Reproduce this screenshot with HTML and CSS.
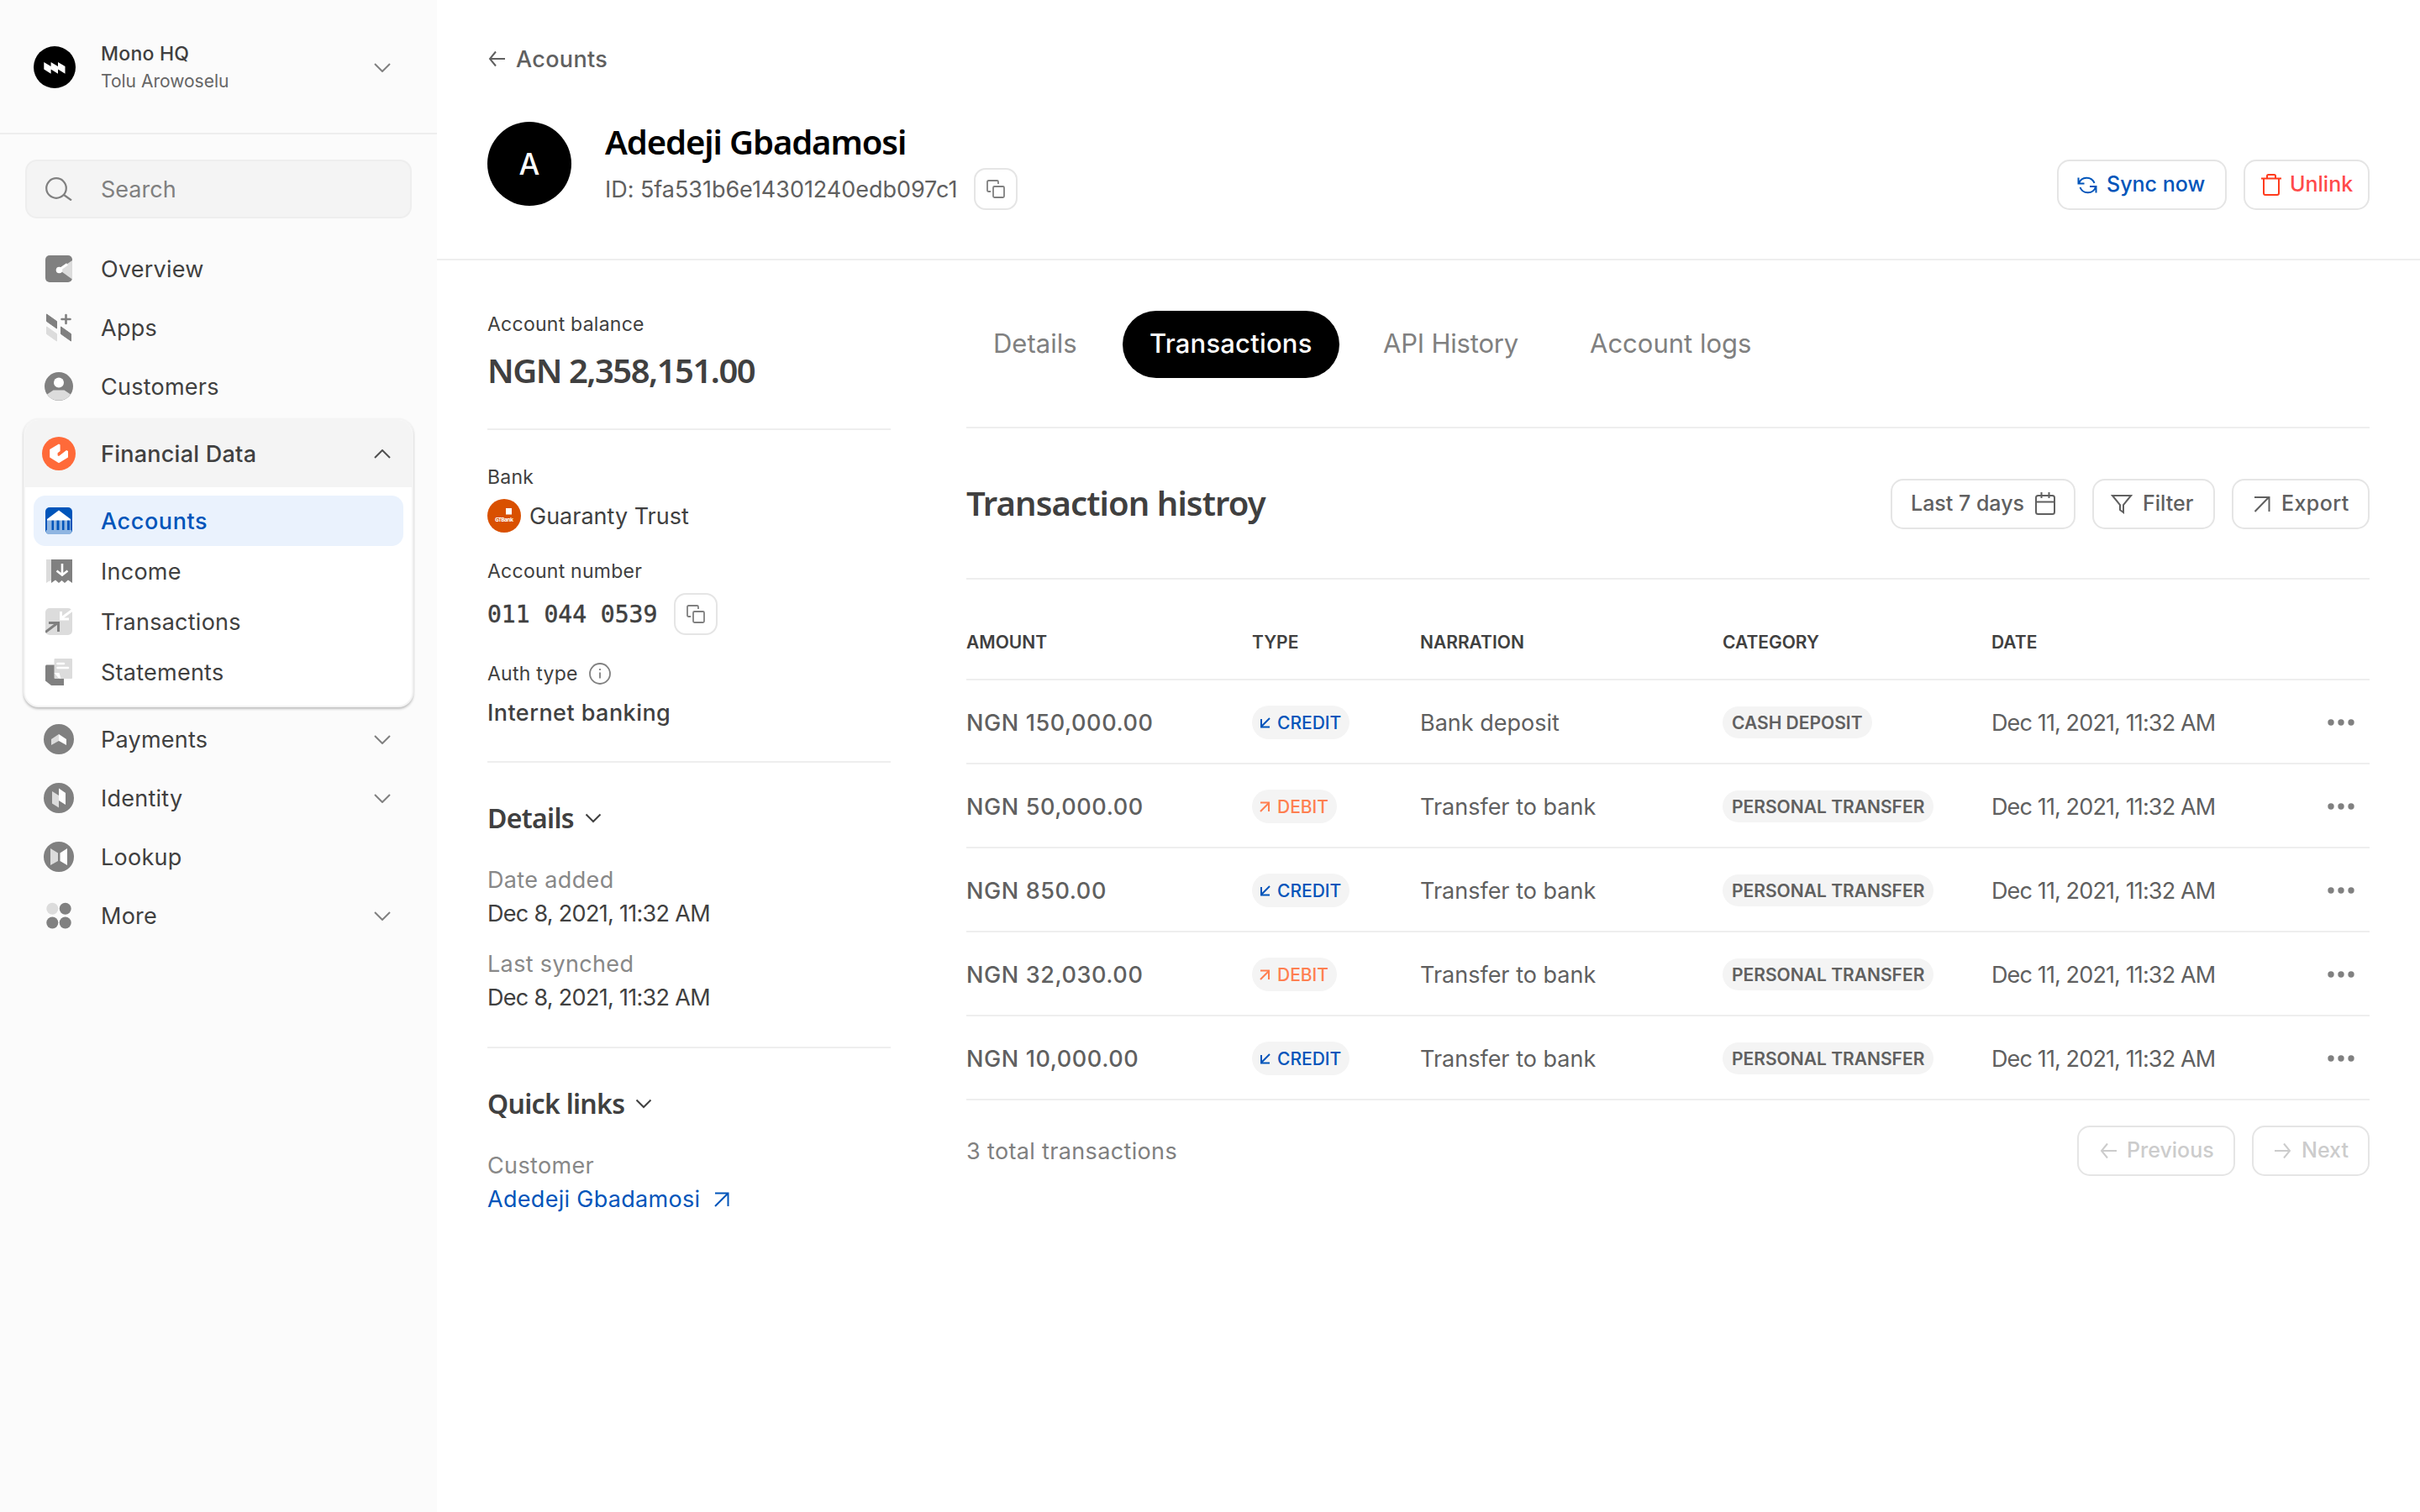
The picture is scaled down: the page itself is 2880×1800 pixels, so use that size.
FILE: index.html
```html
<!DOCTYPE html>
<html lang="en">
<head>
	<meta charset="UTF-8">
	<title>Mono - Account</title>
	<link rel="stylesheet" href="styles.css">
</head>
<body>
	<div class="sidebar">
		<div class="workspace">
			<span class="slot"><svg width="50" height="50"><circle cx="25" cy="25" r="25" fill="#000"/><path fill="#fff" d="M12.3 19l8.3 5v8.7l-8.3-5.2zM20.6 19l8.4 5v8.7l-8.4-5.2zM29 19l8.5 5v8.7L29 27.5z"/></svg></span>
			<div class="workspace-text">
				<div class="workspace-name">Mono HQ</div>
				<div class="workspace-user">Tolu Arowoselu</div>
			</div>
			<svg class="chev" width="20" height="11"><path d="M1 1l9 9 9-9"/></svg>
		</div>
		<div class="search">
			<span class="slot"><svg width="32" height="28" fill="none" stroke="#808080" stroke-width="2.2"><circle cx="13" cy="13" r="11.8"/><path d="M22 21l9 6.5"/></svg></span>
			<span class="search-text">Search</span>
		</div>
		<div class="nav">
			<div class="nav-item">
				<span class="slot"><svg width="32" height="32"><rect width="32" height="32" rx="5" fill="#808080"/><path fill="#dcdcdc" d="M16 17L32 6v22.5z"/><path stroke="#fff" stroke-width="3" d="M16 17.5l10-7"/><circle cx="16.5" cy="17.5" r="3.8" fill="#fff"/></svg></span>
				<span>Overview</span>
			</div>
			<div class="nav-item">
				<span class="slot"><svg width="32" height="34"><path fill="#808080" stroke="#808080" stroke-linejoin="round" d="M1.5 1l12 8.500V18l-12-8.500zM18.500 16l12 8.500V33l-12-8.500z"/><path fill="#dcdcdc" stroke="#dcdcdc" stroke-linejoin="round" d="M1.500 16l12 8.500V33l-12-8.500z"/><path stroke="#808080" stroke-width="2.6" stroke-linecap="round" d="M24.500 2v10M19.500 7h10"/></svg></span>
				<span>Apps</span>
			</div>
			<div class="nav-item">
				<span class="slot"><svg width="34" height="34"><circle cx="17" cy="17" r="17" fill="#808080"/><path fill="#dcdcdc" d="M3 26.500l7.500-5h13l7.500 5A17 17 0 0 1 3 26.500z"/><circle cx="17" cy="12.500" r="6" fill="#fff"/></svg></span>
				<span>Customers</span>
			</div>
			<div class="nav-card">
				<div class="nav-card-head">
					<span class="slot"><svg width="40" height="40"><circle cx="20" cy="20" r="20" fill="#ff6a39"/><path fill="#fff" d="M9.200 15L20 8.500l1.600 1v7.500l-3 2.200v3l1.400.8L29 16l2 1v7.500L20 31.300 9.200 24.500z"/></svg></span>
					<span>Financial Data</span>
					<svg class="chev dark" width="20" height="11"><path d="M1 10l9-9 9 9"/></svg>
				</div>
				<div class="nav-card-body">
					<div class="sub active">
						<span class="slot"><svg width="32" height="32"><rect width="32" height="32" rx="5" fill="#0055ba"/><path fill="#8fb5e1" d="M2 15h5.500v12H2zM10 15h3.500v12H10zM16.500 15h3.500v12h-3.500zM22.500 15H26v12h-3.500zM29 15h1v12h-1zM1 27h30v3l-2 2H3l-2-2z"/><path fill="#fff" d="M16 3.500L30 14v1.500H2V14z"/></svg></span>
						<span>Accounts</span>
					</div>
					<div class="sub">
						<span class="slot"><svg width="31" height="28"><path fill="#dcdcdc" d="M0 0h6v25l-3 1-3 2z"/><path fill="#808080" d="M6 0h25v28l-5-3.500-4 3.500-3.500-3-3.500 3-4-3.500L6 28z"/><path fill="none" stroke="#fff" stroke-width="2.6" d="M19 5v13M12.500 13.500l6.500 5 6.500-5"/></svg></span>
						<span>Income</span>
					</div>
					<div class="sub">
						<span class="slot"><svg width="32" height="32"><rect width="32" height="32" rx="5" fill="#dcdcdc"/><path fill="none" stroke="#fff" stroke-width="3" d="M32 2.500L19 12M18.500 4v9H28"/><path fill="none" stroke="#808080" stroke-width="3" d="M0 28.500L14 18M4 17.500h11.500V28"/></svg></span>
						<span>Transactions</span>
					</div>
					<div class="sub">
						<span class="slot"><svg width="32" height="32"><path fill="#808080" d="M0 8.500l1-1h21V32H7l-7-5.500z"/><rect x="10.500" width="21.500" height="24" rx="1" fill="#dcdcdc"/><path fill="#fff" d="M10.500 17h6l2 7-3-1z"/><path stroke="#fff" stroke-width="2.6" stroke-linecap="round" d="M14.500 6H22M14.500 11H27"/></svg></span>
						<span>Statements</span>
					</div>
				</div>
			</div>
			<div class="nav-item">
				<span class="slot"><svg width="36" height="36"><circle cx="18" cy="18" r="18" fill="#808080"/><path fill="#dcdcdc" d="M9 18l9-6v8l-9 5z"/><path fill="#fff" d="M18 12l9 6v7l-9-5z"/></svg></span>
				<span>Payments</span>
				<svg class="chev" width="20" height="11"><path d="M1 1l9 9 9-9"/></svg>
			</div>
			<div class="nav-item">
				<span class="slot"><svg width="36" height="36"><circle cx="18" cy="18" r="18" fill="#808080"/><path fill="#dcdcdc" d="M10 10l8 5v14.500l-8-5z"/><path fill="#fff" d="M18 6.500l8 5.500v14l-8-5z"/></svg></span>
				<span>Identity</span>
				<svg class="chev" width="20" height="11"><path d="M1 1l9 9 9-9"/></svg>
			</div>
			<div class="nav-item">
				<span class="slot"><svg width="36" height="36"><circle cx="18" cy="18" r="18" fill="#808080"/><path fill="#dcdcdc" d="M8 8l9 5.500V23l-9 5z"/><path fill="#fff" d="M28 8l-8.500 5.500V23l8.500 5z"/></svg></span>
				<span>Lookup</span>
			</div>
			<div class="nav-item">
				<span class="slot"><svg width="30" height="32"><circle cx="7.300" cy="7.800" r="7" fill="#dcdcdc"/><g fill="#808080"><circle cx="22.700" cy="7.800" r="7"/><circle cx="7.300" cy="24.500" r="7"/><circle cx="22.700" cy="24.500" r="7"/></g></svg></span>
				<span>More</span>
				<svg class="chev" width="20" height="11"><path d="M1 1l9 9 9-9"/></svg>
			</div>
		</div>
	</div>

	<div class="main">
		<div class="header">
			<div class="back"><svg width="20" height="20" class="line"><path d="M20 10H2M9 1.500L2 10l7 8.500"/></svg><span>Acounts</span></div>
			<div class="profile">
				<div class="avatar">A</div>
				<div class="profile-text">
					<h1>Adedeji Gbadamosi</h1>
					<div class="profile-id"><span>ID: 5fa531b6e14301240edb097c1</span><button class="copy"><svg width="24" height="24"><path d="M6 15H3.500Q2 15 2 13.500V3.500Q2 2 3.500 2h10Q15 2 15 3.500V6"/><rect x="9" y="9" width="13" height="13" rx="1.500"/></svg></button></div>
				</div>
				<button class="btn sync"><svg width="24" height="21" class="line"><path d="M1.500 1.500v7h7M2 8.500A9.800 9.800 0 0 1 20.500 8M22.500 19.500V12H15M22 12.500A9.800 9.800 0 0 1 3.500 13"/></svg><span>Sync now</span></button>
				<button class="btn unlink"><svg width="24" height="28" class="line"><path d="M0 6.500h24M3 6.500V24q0 2 2 2h14q2 0 2-2V6.500M7 6V3.500Q7 2 8.500 2h7Q17 2 17 3.500V6"/></svg><span>Unlink</span></button>
			</div>
		</div>
		<div class="content">
			<div class="info">
				<div class="section balance">
					<div class="label">Account balance</div>
					<div class="amount">NGN 2,358,151.00</div>
				</div>
				<div class="section bank">
					<div class="label">Bank</div>
					<div class="bank-row"><svg width="40" height="40"><circle cx="20" cy="20" r="20" fill="#d95000"/><rect x="22" y="11" width="7" height="7.500" fill="#fff"/><text class="gt" x="9" y="26.500" textLength="22">GTBank</text></svg><span>Guaranty Trust</span></div>
					<div class="label">Account number</div>
					<div class="number-row"><span class="number">011 044 0539</span><button class="copy"><svg width="24" height="24"><path d="M6 15H3.500Q2 15 2 13.500V3.500Q2 2 3.500 2h10Q15 2 15 3.500V6"/><rect x="9" y="9" width="13" height="13" rx="1.500"/></svg></button></div>
					<div class="label auth"><span>Auth type</span><svg width="26" height="26" fill="none" stroke="#808080" stroke-width="1.8"><circle cx="13" cy="13" r="12"/><path d="M13 11.500v7M13 7v2"/></svg></div>
					<div class="auth-value">Internet banking</div>
				</div>
				<div class="section facts">
					<h3><span>Details</span><svg width="20" height="12" class="line"><path d="M1.500 1.500L10 10l8.500-8.500"/></svg></h3>
					<dl>
						<dt>Date added</dt>
						<dd>Dec 8, 2021, 11:32 AM</dd>
						<dt class="second">Last synched</dt>
						<dd>Dec 8, 2021, 11:32 AM</dd>
					</dl>
				</div>
				<div class="section facts last">
					<h3><span>Quick links</span><svg width="20" height="12" class="line"><path d="M1.500 1.500L10 10l8.500-8.500"/></svg></h3>
					<dl>
						<dt>Customer</dt>
						<dd class="link"><span>Adedeji Gbadamosi</span><svg width="18" height="18" class="line"><path d="M1 17L16 2M1 1.500h15.500V17"/></svg></dd>
					</dl>
				</div>
			</div>
			<div class="panel">
				<div class="tabs">
					<span class="tab t1">Details</span>
					<span class="tab current">Transactions</span>
					<span class="tab t3">API History</span>
					<span class="tab t4">Account logs</span>
				</div>
				<div class="panel-head">
					<h2>Transaction histroy</h2>
					<button class="btn days"><span>Last 7 days</span><svg width="24" height="28" class="line"><rect x="1" y="4" width="22" height="22" rx="2.500"/><path d="M1 11.500h22M7.500 0v7M16.500 0v7"/></svg></button>
					<button class="btn filter"><svg width="26" height="24" class="line"><path d="M2 2h22l-9 11v9l-4-3v-6z"/></svg><span>Filter</span></button>
					<button class="btn export"><svg width="20" height="20" class="line"><path d="M1.500 19L18 2M1 2h17.500v17"/></svg><span>Export</span></button>
				</div>
				<div class="table" id="table">
					<div class="row head"><span>AMOUNT</span><span>TYPE</span><span>NARRATION</span><span>CATEGORY</span><span>DATE</span></div>
				</div>
				<div class="pager">
					<span class="total">3 total transactions</span>
					<button class="btn off prev"><svg width="20" height="20" class="line"><path d="M20 10H2M9 1.500L2 10l7 8.500"/></svg><span>Previous</span></button>
					<button class="btn off next"><svg width="20" height="20" class="line"><path d="M0 10h18M11 1.500L18 10l-7 8.500"/></svg><span>Next</span></button>
				</div>
			</div>
		</div>
	</div>
	<script src="script.js"></script>
</body>
</html>
```
FILE: styles.css
```css
* {
	margin: 0;
	padding: 0;
	box-sizing: border-box;
}
body {
	display: flex;
	height: 1800px;
	background: #fff;
	color: #404040;
	font-family: Inter, sans-serif;
	font-size: 27px;
	white-space: nowrap;
	overflow: hidden;
}
svg {
	display: block;
	flex: none;
}
button {
	background: none;
	font: inherit;
	letter-spacing: inherit;
	color: inherit;
}
.line {
	fill: none;
	stroke: currentColor;
	stroke-width: 2;
}

/* sidebar */
.sidebar {
	width: 520px;
	background: #fbfbfb;
	letter-spacing: 0.25px;
}
.slot {
	width: 40px;
	margin-right: 30px;
	display: flex;
	justify-content: center;
	flex: none;
}
.workspace {
	height: 160px;
	border-bottom: 2px solid #eee;
	display: flex;
	align-items: center;
	padding: 2px 55px 0 45px;
}
.workspace .slot {
	margin-right: 35px;
}
.workspace-name {
	font-size: 23px;
	font-weight: 500;
	line-height: 32px;
}
.workspace-user {
	font-size: 21px;
	line-height: 32px;
	letter-spacing: 0;
	color: #666;
	padding-top: 1px;
}
.chev {
	margin-left: auto;
	fill: none;
	stroke: #808080;
	stroke-width: 2;
}
.chev.dark {
	stroke: #505050;
}
.search {
	margin: 30px 30px 25px;
	height: 70px;
	border: 2px solid #eee;
	border-radius: 14px;
	background: #f4f4f4;
	display: flex;
	align-items: center;
	padding-left: 18px;
	letter-spacing: 0;
	color: #808080;
}
.nav-item {
	height: 70px;
	display: flex;
	align-items: center;
	padding: 0 55px 0 50px;
}
.nav-card {
	margin: 3px 28px;
	height: 344px;
	border: 2px solid #f4f4f4;
	border-radius: 18px;
	background: #fff;
	box-shadow: 0 2px 3px rgba(0,0,0,0.25);
	overflow: hidden;
}
.nav-card-head {
	height: 80px;
	padding: 0 25px 0 20px;
	background: #f4f4f4;
	display: flex;
	align-items: center;
	font-weight: 500;
}
.nav-card-body {
	padding: 10px;
}
.sub {
	height: 60px;
	border-radius: 14px;
	display: flex;
	align-items: center;
	padding-left: 10px;
}
.sub.active {
	background: #eaf2fd;
	color: #0055ba;
	font-weight: 500;
	letter-spacing: 0.6px;
}

/* header */
.main {
	flex: 1;
}
.header {
	height: 310px;
	border-bottom: 2px solid #eee;
	padding: 50px 60px 0;
}
.back {
	display: flex;
	align-items: center;
	height: 40px;
	gap: 13px;
	padding-left: 1px;
	color: #606060;
	font-weight: 500;
	letter-spacing: 0.35px;
}
.profile {
	display: flex;
	align-items: flex-start;
	margin-top: 55px;
}
.avatar {
	width: 100px;
	height: 100px;
	margin-right: 40px;
	border-radius: 50%;
	background: #000;
	color: #fff;
	font-size: 35px;
	font-weight: 500;
	line-height: 100px;
	text-align: center;
}
.profile-text {
	margin-right: auto;
}
h1, h2, h3, .amount {
	font-family: "Noto Sans", sans-serif;
	font-weight: 600;
}
h1 {
	font-size: 40px;
	line-height: 48px;
	letter-spacing: -1.1px;
	color: #000;
}
.profile-id {
	display: flex;
	align-items: center;
	margin-top: 7px;
	color: #606060;
	letter-spacing: -0.04px;
}
.copy {
	width: 52px;
	height: 50px;
	border: 2px solid #e5e5e5;
	border-radius: 14px;
	display: flex;
	align-items: center;
	justify-content: center;
	margin-left: 20px;
}
.copy svg {
	fill: none;
	stroke: #808080;
	stroke-width: 1.8;
}
.btn {
	height: 60px;
	border: 2px solid #e5e5e5;
	border-radius: 15px;
	display: flex;
	align-items: center;
	flex: none;
	font-size: 25px;
	font-weight: 500;
	color: #606060;
}
.btn span {
	padding-bottom: 2px;
}
.profile .btn {
	margin: 45px 0 0 20px;
}
.profile .sync {
	width: 202px;
	padding-left: 22px;
	gap: 11px;
	color: #0055ba;
}
.profile .unlink {
	width: 150px;
	padding-left: 19px;
	gap: 10px;
	color: #ff4a4a;
}
.unlink svg {
	color: #ff3b1d;
}

/* account info column */
.content {
	display: flex;
	padding: 0 60px;
	gap: 90px;
}
.info {
	width: 480px;
	flex: none;
}
.section {
	border-bottom: 2px solid #eee;
}
.label {
	font-size: 23px;
	line-height: 30px;
	letter-spacing: 0.25px;
}
.balance {
	padding: 61px 0 44px;
}
.amount {
	margin-top: 15px;
	font-size: 40px;
	line-height: 50px;
	letter-spacing: -1.5px;
}
.bank {
	padding: 41px 0 37px;
}
.bank-row {
	display: flex;
	align-items: center;
	gap: 10px;
	height: 40px;
	margin: 11px 0 31px;
}
.gt {
	font: bold 6.5px "Noto Sans", sans-serif;
	fill: #fff;
}
.number-row {
	display: flex;
	align-items: center;
	margin: 11px 0 31px;
}
.number {
	font: 28px "DejaVu Sans Mono", monospace;
	-webkit-text-stroke: 0.5px #404040;
}
.auth {
	display: flex;
	align-items: center;
	gap: 13px;
}
.auth-value {
	margin-top: 12px;
	line-height: 40px;
	font-weight: 500;
	letter-spacing: 0.45px;
}
.facts {
	padding: 46px 0 38px;
}
.last {
	border: 0;
}
h3 {
	display: flex;
	align-items: center;
	gap: 13px;
	font-size: 32px;
	line-height: 40px;
	letter-spacing: -0.7px;
	margin-bottom: 34px;
}
dt, dd {
	line-height: 40px;
}
dt {
	color: #888;
	letter-spacing: 0.35px;
}
dd {
	letter-spacing: -0.7px;
}
.second {
	margin-top: 20px;
}
.link {
	display: flex;
	align-items: center;
	gap: 17px;
	color: #0055ba;
	letter-spacing: 0.3px;
}

/* transactions panel */
.panel {
	flex: 1;
}
.tabs {
	display: flex;
	gap: 20px;
	padding: 60px 0 58px;
	border-bottom: 2px solid #eee;
	font-size: 31px;
	color: #808080;
}
.tab {
	height: 80px;
	line-height: 78px;
	padding-left: 32px;
	border-radius: 40px;
}
.t1 { width: 166px; }
.current {
	width: 258px;
	background: #000;
	color: #fff;
	font-weight: 500;
	letter-spacing: 0.2px;
}
.t3 {
	width: 226px;
	letter-spacing: -0.2px;
}
.panel-head {
	display: flex;
	padding: 60px 0 58px;
	border-bottom: 2px solid #eee;
	gap: 20px;
}
h2 {
	font-size: 40px;
	line-height: 58px;
	letter-spacing: -0.9px;
	margin-right: auto;
}
.days { width: 220px; padding-left: 22px; gap: 13px; }
.filter { width: 146px; padding-left: 20px; gap: 12px; }
.export { width: 164px; padding-left: 24px; gap: 13px; }
.export span { letter-spacing: 0.4px; }
.row {
	display: grid;
	grid-template-columns: 340px 200px 360px 320px 1fr;
	align-items: center;
	height: 100px;
	padding-top: 2px;
	border-bottom: 2px solid #eee;
	color: #606060;
}
.row.head {
	height: 120px;
	padding-top: 30px;
	font-size: 21px;
	font-weight: 600;
	color: #404040;
}
.money {
	font-weight: 500;
	letter-spacing: 0.6px;
}
.when {
	display: flex;
	justify-content: space-between;
	align-items: center;
	padding-right: 18px;
	letter-spacing: -0.87px;
}
.tag {
	display: inline-flex;
	align-items: center;
	height: 38px;
	padding: 0 11px;
	border-radius: 20px;
	background: #f4f4f4;
	font-size: 21px;
	font-weight: 600;
	vertical-align: middle;
}
.credit, .debit {
	height: 40px;
	padding: 0 10px 0 9px;
	gap: 8px;
	font-weight: 500;
}
.credit { color: #0055ba; }
.debit { color: #ff7f50; }
.pager {
	display: flex;
	align-items: center;
	gap: 20px;
	padding-top: 30px;
	color: #808080;
}
.total {
	margin-right: auto;
	letter-spacing: 0.35px;
}
.off { color: #ccc; }
.prev { width: 188px; padding-left: 25px; gap: 12px; }
.next { width: 140px; padding-left: 25px; gap: 12px; }
```
FILE: script.js
```js
var rows = [
	["NGN 150,000.00", "credit", "Bank deposit", "CASH DEPOSIT"],
	["NGN 50,000.00", "debit", "Transfer to bank", "PERSONAL TRANSFER"],
	["NGN 850.00", "credit", "Transfer to bank", "PERSONAL TRANSFER"],
	["NGN 32,030.00", "debit", "Transfer to bank", "PERSONAL TRANSFER"],
	["NGN 10,000.00", "credit", "Transfer to bank", "PERSONAL TRANSFER"]
];
var arrows = {
	credit: "M12 1L2 11M2 2v9.500h10",
	debit: "M1 12L11 2M1 1.500h10V12"
};
var html = "";
for (var i = 0; i < rows.length; i++) {
	var r = rows[i];
	html += '<div class="row"><span class="money">' + r[0] + '</span>' +
		'<span><span class="tag ' + r[1] + '"><svg width="13" height="13" class="line"><path d="' + arrows[r[1]] + '"/></svg><span>' + r[1].toUpperCase() + '</span></span></span>' +
		'<span class="narration">' + r[2] + '</span>' +
		'<span><span class="tag category">' + r[3] + '</span></span>' +
		'<span class="when"><span>Dec 11, 2021, 11:32 AM</span><svg width="32" height="8" fill="#808080"><circle cx="4" cy="4" r="3.700"/><circle cx="16" cy="4" r="3.700"/><circle cx="28" cy="4" r="3.700"/></svg></span></div>';
}
document.getElementById("table").innerHTML += html;
```
